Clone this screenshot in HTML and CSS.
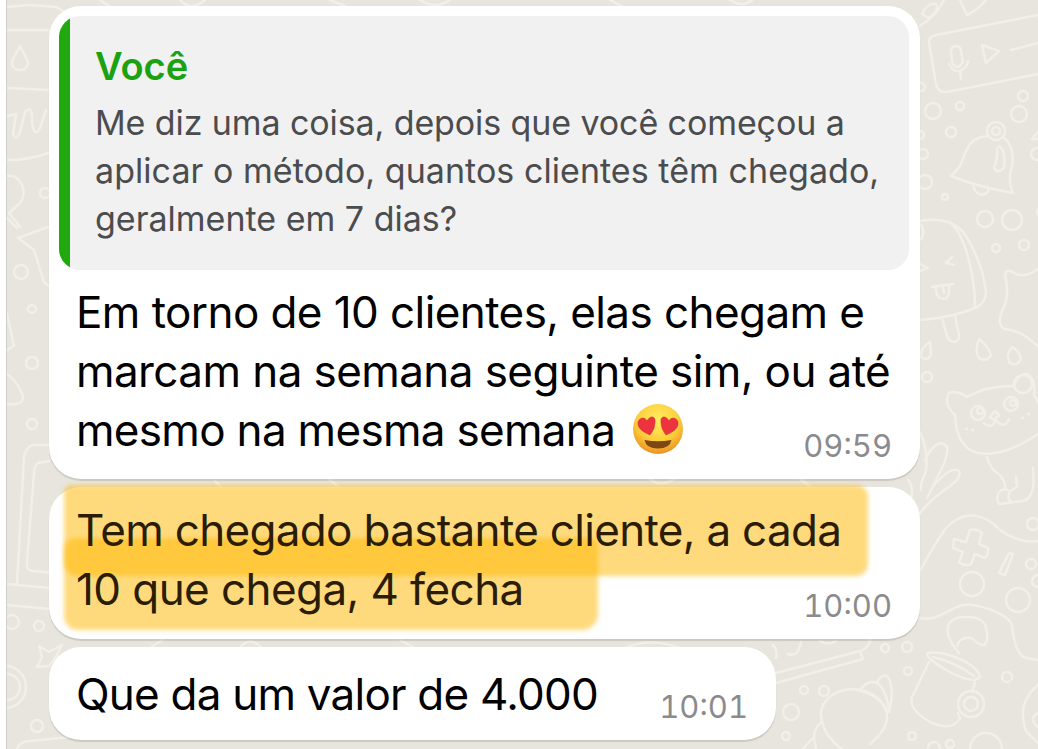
FILE: index.html
```html
<!DOCTYPE html>
<html lang="pt-BR">
<head>
    <meta charset="UTF-8">
    <meta name="viewport" content="width=device-width, initial-scale=1.0">
    <title>Conversa</title>
    <link rel="stylesheet" href="styles.css">
</head>
<body>
    <div class="chat">
        <svg class="wallpaper" viewBox="0 0 1038 749" aria-hidden="true">
            <!-- left strip -->
            <path d="M7 7L30 5L56 7L68 14M7 30H48M20 46C16 54 12 58 12 64C14 72 26 72 28 64C28 58 22 52 20 46ZM7 88L48 90M7 116L16 114L13 134Q16 142 20 132L25 112Q30 106 32 114V124Q35 138 40 128L46 110M7 160Q30 160 48 153"/>
            <path d="M7 176C22 174 28 194 20 203L9 213L20 227M7 218L17 228M48 227L18 238L34 250L44 282L49 286M7 314L14 346L7 350M7 404Q24 406 23 396Q18 382 7 374"/>
            <circle cx="45" cy="193" r="5"/><circle cx="21" cy="272" r="7"/><circle cx="32" cy="309" r="4"/><circle cx="32" cy="363" r="6"/><circle cx="32" cy="424" r="5"/>
            <path d="M49 445H32Q25 449 24 457L17 584M49 461L38 463Q34 466 34 473L27 562Q26 570 32 571L56 573M7 584L50 588M7 605L50 609"/>
            <circle cx="12" cy="622" r="7"/><circle cx="39" cy="626" r="5"/><circle cx="7" cy="687" r="13"/><circle cx="5" cy="687" r="21"/><circle cx="37" cy="726" r="6"/>
            <path d="M39 646L49 652L62 645L56 657L49 666L37 667L42 657ZM17 749Q20 741 30 741L70 737"/>
            <!-- above and between the bubbles -->
            <path d="M100 0L112 8M180 0Q190 12 205 0M330 0L345 6M420 0Q435 10 450 0M610 0L625 8M730 0Q742 8 752 0M215 481L222 488M330 480L340 488M650 479Q660 488 674 479M800 479L812 488M150 648L165 638M240 648Q250 635 262 648M400 640L415 648M625 648Q650 637 680 648"/>
            <!-- voice note -->
            <path d="M920 26Q936 16 944 0M922 14Q928 2 936 4Q940 12 928 18ZM960 0L967 15Q978 10 986 0M1038 15L936 35Q928 37 929 43L936 84Q938 93 947 92L1038 74"/>
            <path d="M951 52Q951 46 956 46Q961 46 961 52L963 61Q961 67 957 67Q953 66 952 61ZM949 64Q953 72 959 71Q967 69 968 61M960 71L961 79M982 45L999 51L986 63ZM1011 50L1038 43"/>
            <circle cx="921" cy="87" r="4"/><circle cx="933" cy="111" r="8"/><circle cx="960" cy="106" r="4"/><circle cx="1023" cy="96" r="5"/><circle cx="1019" cy="114" r="8"/><circle cx="951" cy="132" r="5"/><circle cx="920" cy="135" r="4"/><circle cx="923" cy="154" r="5"/><circle cx="925" cy="182" r="7"/><circle cx="945" cy="197" r="3"/>
            <path d="M1038 132L1032 139H1038"/><circle cx="1037" cy="154" r="6"/>
            <!-- bell -->
            <circle cx="996" cy="131" r="9"/><circle cx="996" cy="131" r="4"/>
            <path d="M988 136C970 137 967 148 963 159Q960 168 951 176Q978 187 1013 193Q1007 181 1012 166Q1015 146 1003 137M999 146Q1006 151 1004 168Q998 174 994 168Q998 158 997 148M973 185Q976 198 987 193L989 189"/>
            <circle cx="985" cy="219" r="8"/><circle cx="1012" cy="220" r="10"/><circle cx="996" cy="248" r="4"/><circle cx="1024" cy="245" r="5"/><circle cx="1041" cy="212" r="4"/>
            <!-- popsicle -->
            <path d="M920 221C940 217 957 222 966 236Q983 264 986 292Q986 302 977 307Q955 317 920 320M950 222C966 236 975 278 975 307M920 240Q927 232 920 224M920 264L928 268L920 271M952 257L946 263L954 265M932 287L953 284M936 288Q936 299 944 299Q950 298 949 286M943 287L944 293M942 318L947 336Q950 344 957 341Q961 338 958 331L955 315"/>
            <path d="M1038 269Q1025 278 1016 274Q1006 267 1005 275Q1010 295 1003 309Q996 323 1004 329Q1022 330 1038 347M979 339Q974 352 979 358Q986 363 991 355Q989 347 979 339ZM1012 347Q1005 356 1010 363Q1017 367 1021 359Q1019 350 1012 347ZM930 342Q920 348 921 357Q928 362 931 354Z"/>
            <circle cx="1023" cy="384" r="9"/><circle cx="927" cy="377" r="5"/>
            <!-- cat -->
            <path d="M955 415Q943 404 949 393Q956 390 967 397Q988 385 1014 386Q1018 373 1028 374Q1036 380 1034 395L1038 402M955 415C957 470 1004 457 1038 434M987 457Q990 469 1000 475Q1006 483 1005 489M1033 468Q1036 500 1022 501L1000 504Q996 503 998 494Q1002 487 1010 491L1017 487L1016 477M1010 491Q1006 499 1012 502M995 411L999 415L994 420L990 417ZM996 420Q991 430 984 423M996 420Q1004 430 1009 419"/>
            <circle cx="978" cy="413" r="7"/><circle cx="1011" cy="404" r="7"/><circle cx="980" cy="411" r="3"/><circle cx="1013" cy="403" r="3"/>
            <path d="M966 429H967M972 430H973M1022 418H1023M1028 414H1029"/>
            <!-- leaves and gamepad -->
            <path d="M908 480Q915 487 910 502M920 432Q930 455 925 474Q920 484 921 490M925 460C932 445 941 439 947 447Q949 456 937 478L927 498M934 485Q952 465 959 471Q962 477 950 486Q930 500 920 513M920 571Q934 545 946 528C966 507 987 516 1000 530Q1020 544 1038 541M920 618C942 623 952 601 974 605Q1006 612 1012 625Q1015 655 1026 658L1038 660M954 539L966 542L970 530Q977 528 982 533L979 544L988 548Q989 554 985 558L975 554L971 564Q965 567 959 562L963 552L953 548ZM1009 553L1013 554L1005 575L999 573Z"/>
            <circle cx="972" cy="584" r="12"/><circle cx="1018" cy="600" r="12"/><circle cx="1031" cy="564" r="5"/><circle cx="1033" cy="524" r="6"/><circle cx="1038" cy="581" r="6"/>
            <!-- mug -->
            <path d="M959 653C939 630 948 616 966 617Q979 616 985 624Q990 640 984 645Q978 645 972 638Q960 636 957 646M928 653C944 650 977 663 980 677Q972 685 946 670Q923 656 928 653ZM933 657Q955 662 974 676M929 662L912 697Q908 709 930 722Q953 732 960 718L958 713M975 682L972 692"/>
            <circle cx="971" cy="704" r="13"/><circle cx="971" cy="704" r="7"/>
            <circle cx="885" cy="648" r="4"/><circle cx="907" cy="647" r="5"/><circle cx="908" cy="671" r="4"/><circle cx="1007" cy="677" r="5"/><circle cx="912" cy="736" r="4"/><circle cx="986" cy="749" r="16"/><circle cx="950" cy="744" r="4"/><circle cx="934" cy="748" r="6"/>
            <path d="M1038 685Q1016 703 1026 731L1038 743M1038 713Q1028 719 1038 727"/>
            <!-- cupcake and brush -->
            <path d="M776 673L860 651L863 659L776 683M776 658Q778 650 773 645M788 654Q798 658 801 642M820 641Q828 646 836 641M861 651Q870 646 870 640M822 721C817 705 831 690 852 689C880 690 888 710 887 720Q884 733 870 744M822 721Q825 737 842 749M852 689Q880 694 888 712M860 690Q868 679 877 683Q887 690 889 712Q895 690 888 677Q881 673 877 683M803 749Q810 740 814 738Q814 727 822 722M814 738L816 749"/>
            <circle cx="804" cy="690" r="4"/><circle cx="824" cy="691" r="5"/><circle cx="791" cy="712" r="8"/><circle cx="786" cy="736" r="4"/>
        </svg>

        <div class="bubble">
            <div class="quote">
                <div class="author">Você</div>
                <div class="line q1">Me diz uma coisa, depois que você começou a</div>
                <div class="line q2">aplicar o método, quantos clientes têm chegado,</div>
                <div class="line q3">geralmente em 7 dias?</div>
            </div>
            <div class="text">
                <div class="line t1">Em torno de 10 clientes, elas chegam e</div>
                <div class="line t2">marcam na semana seguinte sim, ou até</div>
                <div class="line t3">mesmo na mesma semana
                    <svg class="emoji" viewBox="0 0 52 52" role="img" aria-label="olhos de coração">
                        <defs>
                            <radialGradient id="face" cx="50%" cy="32%" r="68%">
                                <stop offset="0" stop-color="#ffee63"/>
                                <stop offset=".6" stop-color="#fdcf3c"/>
                                <stop offset="1" stop-color="#eb9224"/>
                            </radialGradient>
                        </defs>
                        <circle cx="26" cy="26" r="25" fill="url(#face)"/>
                        <path class="heart" d="M18 32C11 29 5 25 6 19C8 14 13 14 15 18C18 12 24 13 23 19C23 24 21 28 18 32Z"/>
                        <path class="heart" d="M34 32C41 29 47 25 46 19C44 14 39 14 37 18C34 12 28 13 29 19C29 24 31 28 34 32Z"/>
                        <path d="M12.500 37Q26 39.500 39.500 37Q38 45.500 26 45.500Q14 45.500 12.500 37Z" fill="#7d4612"/>
                    </svg>
                </div>
            </div>
            <span class="time">09:59</span>
        </div>

        <div class="bubble marked">
            <div class="marker marker-top"></div>
            <div class="marker marker-bottom"></div>
            <div class="text">
                <div class="line t4">Tem chegado bastante cliente, a cada</div>
                <div class="line t5">10 que chega, 4 fecha</div>
            </div>
            <span class="time">10:00</span>
        </div>

        <div class="bubble short">
            <div class="text">
                <div class="line t6">Que da um valor de 4.000</div>
            </div>
            <span class="time">10:01</span>
        </div>
    </div>
</body>
</html>
```
FILE: styles.css
```css
* {
    box-sizing: border-box;
}
body {
    margin: 0;
    background-color: #fff;
    font-family: Inter, "Liberation Sans", sans-serif;
}
.chat {
    position: relative;
    display: flex;
    flex-direction: column;
    align-items: flex-start;
    gap: 8px;
    height: 749px;
    margin-left: 6px;
    padding: 6px 0 0 42px;
    border-left: 1px solid #cfcdc9;
    background-color: #e7e5dd;
    overflow: hidden;
}
.wallpaper {
    position: absolute;
    top: 0;
    left: -7px;
    width: 1038px;
    height: 749px;
    fill: none;
    stroke: #f1efe7;
    stroke-width: 2.5;
    stroke-linecap: round;
    stroke-linejoin: round;
}
.bubble {
    position: relative;
    width: 871px;
    height: 473px;
    padding: 10px 11px 0 10px;
    border-radius: 32px;
    background-color: #fff;
    box-shadow: 0 2px 1px rgba(0, 0, 0, 0.12);
}
.quote {
    height: 254px;
    padding: 26px 0 0 36px;
    border-radius: 21px;
    background: linear-gradient(to right, #20a80f 11px, #f1f1f1 11px);
    color: #4b4c4e;
    font-size: 34px;
    line-height: 48px;
}
.author {
    margin-bottom: 9px;
    color: #1ba112;
    font-size: 38px;
    font-weight: 600;
    line-height: 48px;
}
.line {
    width: max-content;
    white-space: nowrap;
}
.text {
    position: relative;
    padding: 13px 0 0 17px;
    color: #000;
    font-size: 44px;
    line-height: 59px;
}
.q1 {
    letter-spacing: -0.1px;
}
.q2 {
    letter-spacing: 0.05px;
}
.t1,
.t2,
.t5 {
    letter-spacing: -0.58px;
}
.t3,
.t4 {
    letter-spacing: -0.69px;
}
.t6 {
    letter-spacing: -0.78px;
}
.emoji {
    width: 52px;
    height: 52px;
    margin-left: 5px;
    vertical-align: -9px;
}
.heart {
    fill: #ee3340;
    stroke: #cf302c;
    stroke-width: 0.6;
}
.time {
    position: absolute;
    right: 28px;
    bottom: 13px;
    color: #8b8b8e;
    font-size: 31px;
    font-variant-numeric: tabular-nums;
    line-height: 40px;
}
.marked {
    height: 152px;
    padding-top: 1px;
}
.marked .text {
    color: #2b1c04;
}
.marker {
    position: absolute;
    left: 15px;
    background-color: rgba(255, 182, 0, 0.51);
    filter: blur(2px);
}
.marker-top {
    top: -2px;
    width: 804px;
    height: 91px;
    border-radius: 8px 12px 12px 14px;
}
.marker-bottom {
    top: 51px;
    width: 534px;
    height: 92px;
    border-radius: 12px 8px 16px 14px;
}
.short {
    width: 727px;
    height: 93px;
    padding-top: 5px;
}
```
